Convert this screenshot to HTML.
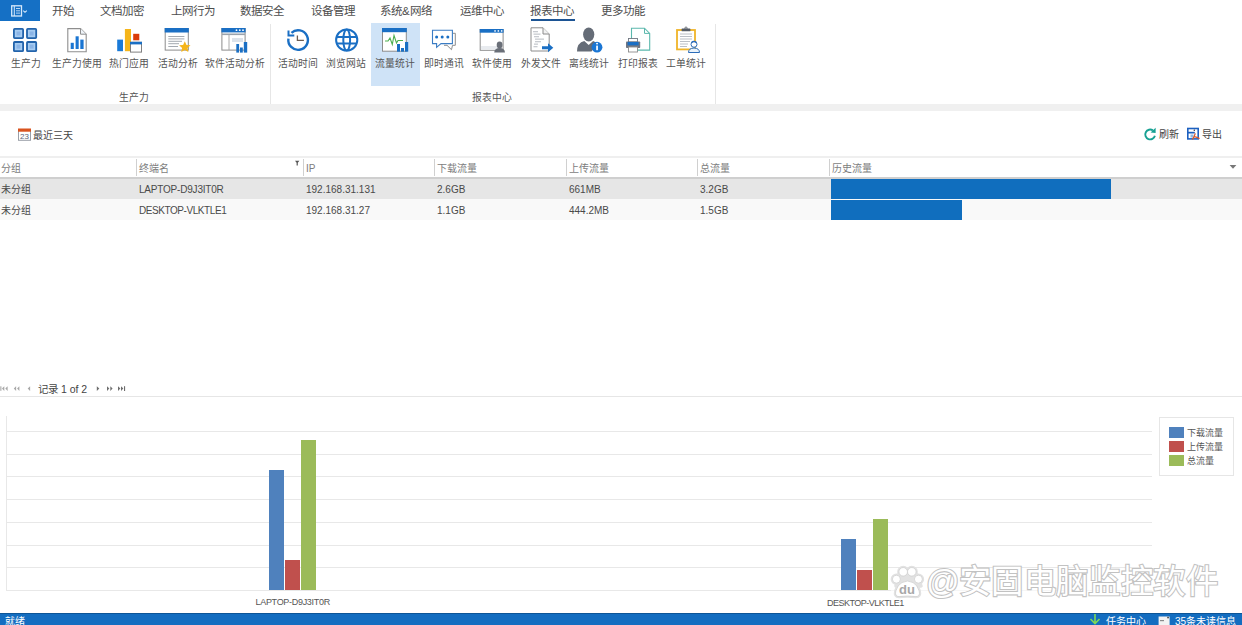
<!DOCTYPE html>
<html lang="zh-CN">
<head>
<meta charset="utf-8">
<style>
*{margin:0;padding:0;box-sizing:border-box}
html,body{width:1242px;height:625px;overflow:hidden;background:#fff}
body{position:relative;font-family:"Liberation Sans",sans-serif;color:#444}
.a{position:absolute;white-space:nowrap}
.tab{position:absolute;top:3.3px;font-size:11.5px;line-height:16px;color:#4d4d4d}
.lbl{position:absolute;top:57px;font-size:9.8px;line-height:14px;color:#555;text-align:center;width:60px;margin-left:-30px}
.ico{position:absolute;top:27px;width:26px;height:26px;margin-left:-13px}
.ico svg{display:block}
.sep{position:absolute;top:24px;height:80px;width:1px;background:#e6e6e6}
.th{position:absolute;top:158.5px;height:20px;font-size:10px;line-height:20px;color:#7d7d7d}
.hsep{position:absolute;top:159px;width:1px;height:17px;background:#d0d0d0}
.td{position:absolute;font-size:10px;line-height:20px;color:#4a4a4a}
.grid{position:absolute;left:6px;width:1146px;height:1px;background:#e8e8e8}
</style>
</head>
<body>
<!-- app button -->
<div class="a" style="left:0;top:0;width:40px;height:21px;background:#1570c5"></div>
<svg class="a" style="left:10px;top:4px" width="20" height="14" viewBox="10 4 20 14">
 <rect x="11.7" y="5.8" width="9.8" height="10.2" fill="none" stroke="#d6e8fa" stroke-width="1.3"/>
 <line x1="14.3" y1="5.8" x2="14.3" y2="16" stroke="#d6e8fa" stroke-width="1"/>
 <rect x="16" y="8" width="4" height="1" fill="#b8d4f2"/><rect x="16" y="10.3" width="4" height="1" fill="#b8d4f2"/><rect x="16" y="12.6" width="4" height="1" fill="#b8d4f2"/>
 <path d="M23.2 10.6 L25 12.3 L26.8 10.6" fill="none" stroke="#d6e8fa" stroke-width="1.1"/>
</svg>

<!-- tabs -->
<div class="tab" style="left:52px">开始</div>
<div class="tab" style="left:100px">文档加密</div>
<div class="tab" style="left:171px">上网行为</div>
<div class="tab" style="left:240px">数据安全</div>
<div class="tab" style="left:311px">设备管理</div>
<div class="tab" style="left:380px">系统&amp;网络</div>
<div class="tab" style="left:460px">运维中心</div>
<div class="tab" style="left:530px">报表中心</div>
<div class="a" style="left:530.5px;top:18.7px;width:44.5px;height:2.5px;background:#1c5494"></div>
<div class="tab" style="left:601px">更多功能</div>

<!-- ribbon -->
<div class="a" style="left:371px;top:23px;width:49px;height:63px;background:#cfe3f7"></div>
<div class="sep" style="left:270px"></div>
<div class="sep" style="left:715px"></div>

<svg class="a" style="left:0;top:0" width="720" height="104" viewBox="0 0 720 104">
<!-- 1 grid -->
<g stroke="#2263ab" stroke-width="1.8" fill="#a6ccf2">
<rect x="13.9" y="28.9" width="9.2" height="9.2" rx="0.8"/>
<rect x="27" y="28.9" width="9.2" height="9.2" rx="0.8"/>
<rect x="13.9" y="42" width="9.2" height="9.2" rx="0.8"/>
<rect x="27" y="42" width="9.2" height="9.2" rx="0.8"/>
</g>
<g fill="#8ab4e6">
<rect x="16.5" y="31.5" width="4" height="4"/><rect x="29.6" y="31.5" width="4" height="4"/>
<rect x="16.5" y="44.6" width="4" height="4"/><rect x="29.6" y="44.6" width="4" height="4"/>
</g>
<!-- 2 doc chart -->
<path d="M67.8 28.6 H80.5 L86.2 34.2 V51.7 H67.8 Z" fill="#fff" stroke="#8e8e8e" stroke-width="1.1"/>
<path d="M80.5 28.6 V34.2 H86.2" fill="#eef3f8" stroke="#8e8e8e" stroke-width="1"/>
<g fill="#1a75d2">
<rect x="70.7" y="42.8" width="3.1" height="6.2"/>
<rect x="75.6" y="36.3" width="3.1" height="12.7"/>
<rect x="80.3" y="39.6" width="3.3" height="9.4"/>
</g>
<!-- 3 hot apps -->
<rect x="117.2" y="39.6" width="5.8" height="11.6" fill="#1a7ad8"/>
<rect x="124.9" y="29" width="6.1" height="22.2" fill="#f5b51b"/>
<rect x="133.2" y="33.8" width="6.1" height="6.5" fill="#da3c0a"/>
<rect x="130.5" y="42.3" width="11" height="9.8" fill="#fff" stroke="#7f7f7f" stroke-width="1"/>
<rect x="130" y="41.8" width="12" height="2.6" fill="#1a6fc4"/>
<!-- 4 activity analysis -->
<rect x="165.2" y="28.5" width="23.1" height="21.6" fill="#fff" stroke="#8c8c8c" stroke-width="1"/>
<rect x="164.7" y="28" width="24.1" height="4.5" fill="#1a6fc4"/>
<g stroke="#9aa0a8" stroke-width="0.9">
<line x1="168.3" y1="36.5" x2="184.4" y2="36.5"/>
<line x1="168.3" y1="38.9" x2="184.4" y2="38.9"/>
<line x1="168.3" y1="41.3" x2="182" y2="41.3"/>
<line x1="168.3" y1="43.7" x2="179" y2="43.7"/>
<line x1="168.3" y1="46.5" x2="178" y2="46.5"/>
</g>
<path d="M184.8 41.2 L186.5 44.9 L190.5 45.3 L187.5 48 L188.4 52 L184.8 49.9 L181.2 52 L182.1 48 L179.1 45.3 L183.1 44.9 Z" fill="#f5b51b"/>
<!-- 5 software activity analysis -->
<rect x="221.9" y="28.5" width="23.2" height="21.6" fill="#fff" stroke="#8c8c8c" stroke-width="1"/>
<rect x="221.4" y="28" width="24.2" height="4.4" fill="#1a6fc4"/>
<g fill="#fff"><circle cx="236.5" cy="30.2" r="0.9"/><circle cx="239.8" cy="30.2" r="0.9"/><circle cx="243" cy="30.2" r="0.9"/></g>
<rect x="222" y="33.5" width="23" height="1.6" fill="#9aa3ad"/>
<line x1="229" y1="35" x2="229" y2="50" stroke="#a0a0a0" stroke-width="0.9"/>
<rect x="232" y="38" width="11" height="4" fill="#dde3ea"/>
<g fill="#1a6fc4">
<rect x="236.3" y="44" width="2.8" height="8.6"/>
<rect x="240" y="47.5" width="2.8" height="5.1"/>
<rect x="243.8" y="42" width="3.4" height="10.6"/>
</g>
<!-- 6 history clock -->
<path d="M291.46 32.8 A9.8 9.8 0 1 1 288.4 38.6" fill="none" stroke="#1a6fc4" stroke-width="2.4"/>
<path d="M288.5 30.4 V35.6 H294.3" fill="none" stroke="#1a6fc4" stroke-width="2"/>
<path d="M297.4 35.6 V40.4 H303.9" fill="none" stroke="#6e5d52" stroke-width="1.3"/>
<!-- 7 globe -->
<g fill="none" stroke="#1a6fc4" stroke-width="2">
<circle cx="346.7" cy="40" r="10.6"/>
<ellipse cx="346.7" cy="40" rx="3.4" ry="10.6"/>
<line x1="336.5" y1="37" x2="357" y2="37"/>
<line x1="336.5" y1="43.5" x2="357" y2="43.5"/>
</g>
<!-- 8 traffic stats -->
<rect x="382.5" y="28.5" width="23.8" height="22.7" fill="#fff" stroke="#8c8c8c" stroke-width="1"/>
<rect x="382" y="28" width="24.8" height="4.2" fill="#1a6fc4"/>
<path d="M385 41 H388 L390 38 L392.3 44.5 L394 35.5 L396.5 43 L398 40.5 H403" fill="none" stroke="#4caf50" stroke-width="1.1"/>
<g fill="#1a6fc4">
<rect x="397" y="44" width="3" height="7.7"/>
<rect x="401" y="48" width="3" height="3.7"/>
<rect x="405" y="42" width="3.2" height="9.7"/>
</g>
<!-- 9 chat -->
<path d="M453 33.3 H455.3 V45.3 H452.5 L451.5 49.7 L447 45.3 H444" fill="#fff" stroke="#8c8c8c" stroke-width="1"/>
<path d="M432.5 30.3 H452.4 V43.6 H441 L436.6 47.3 V43.6 H432.5 Z" fill="#fff" stroke="#3a7cc4" stroke-width="1.1"/>
<g fill="#1a6fc4"><circle cx="436.6" cy="37" r="1.5"/><circle cx="442.2" cy="37" r="1.5"/><circle cx="447.8" cy="37" r="1.5"/></g>
<!-- 10 software use -->
<rect x="480.2" y="29.5" width="22.9" height="20.8" fill="#fff" stroke="#8c8c8c" stroke-width="1"/>
<rect x="479.7" y="29" width="23.9" height="3.7" fill="#1a6fc4"/>
<g fill="#fff"><rect x="494.3" y="30.2" width="1.5" height="1.5"/><rect x="497.6" y="30.2" width="1.5" height="1.5"/><rect x="500.9" y="30.2" width="1.5" height="1.5"/></g>
<rect x="481" y="46" width="21" height="3.5" fill="#e8ebef"/>
<ellipse cx="499.6" cy="45" rx="2.9" ry="3.4" fill="#6a6f78"/>
<path d="M494.2 52.6 Q494.5 48.3 499.6 48.1 Q504.7 48.3 505 52.6 Z" fill="#6a6f78"/>
<!-- 11 outgoing file -->
<path d="M531 27.8 H543 L549.2 34 V51 H531 Z" fill="#fff" stroke="#8c8c8c" stroke-width="1"/>
<path d="M543 27.8 V34 H549.2" fill="#f2f2f2" stroke="#8c8c8c" stroke-width="1"/>
<g fill="#c8cbd0">
<rect x="533" y="31" width="5" height="1.3"/><rect x="533.5" y="33.5" width="7" height="1.3"/>
<rect x="534" y="36" width="5" height="1.3"/><rect x="535" y="38.5" width="9" height="1.3"/>
<rect x="535" y="41" width="6" height="1.3"/><rect x="534" y="43.5" width="4" height="1.3"/>
<rect x="533.5" y="46" width="4" height="1.3"/>
</g>
<path d="M542 46.3 H548 V43.3 L553.3 47.8 L548 52.3 V49.3 H542 Z" fill="#1a6fc4"/>
<!-- 12 offline stats -->
<ellipse cx="588.7" cy="34.5" rx="5.6" ry="7" fill="#656c77"/>
<path d="M577 51.5 Q577 42.8 584.3 41 L588.7 45 L593.1 41 Q596 42 597.5 44 L591.5 51.5 Z" fill="#656c77"/>
<circle cx="597" cy="47.2" r="5.4" fill="#1a76d4"/>
<rect x="596.2" y="45.6" width="1.7" height="4.6" fill="#fff"/>
<circle cx="597.05" cy="43.6" r="0.95" fill="#fff"/>
<!-- 13 print report -->
<path d="M631.5 28.2 H644.5 L649.7 33.4 V50.1 H631.5 Z" fill="#fff" stroke="#5bb8ad" stroke-width="1.1"/>
<path d="M644.5 28.2 V33.4 H649.7" fill="none" stroke="#5bb8ad" stroke-width="1"/>
<rect x="628.5" y="38.5" width="9" height="3.5" fill="#fff" stroke="#707782" stroke-width="0.9"/>
<rect x="626" y="41.5" width="14.2" height="6.5" rx="0.8" fill="#6f7683"/>
<rect x="627.6" y="42" width="11" height="3.3" fill="#1a6fc4"/>
<rect x="628.5" y="47" width="9" height="5" fill="#fff" stroke="#8c8c8c" stroke-width="0.9"/>
<!-- 14 work order -->
<rect x="677" y="30" width="18" height="19.4" fill="#fff" stroke="#f0b429" stroke-width="1.8"/>
<rect x="681.6" y="28.5" width="8.8" height="2.8" rx="0.6" fill="#555c66"/>
<circle cx="686" cy="28.2" r="1.2" fill="none" stroke="#555c66" stroke-width="0.8"/>
<g stroke="#b3b8bf" stroke-width="0.9">
<line x1="680" y1="34" x2="692" y2="34"/><line x1="680" y1="36.5" x2="692" y2="36.5"/>
<line x1="680" y1="39" x2="692" y2="39"/><line x1="680" y1="41.5" x2="690" y2="41.5"/>
<line x1="680" y1="44" x2="688" y2="44"/><line x1="680" y1="46.5" x2="687" y2="46.5"/>
</g>
<circle cx="694" cy="44.3" r="3" fill="#fff" stroke="#2c6cb8" stroke-width="1"/>
<path d="M688.5 52.5 Q688.5 48.3 694 48 Q699.5 48.3 699.5 52.5 Z" fill="#eaf3fb" stroke="#2c6cb8" stroke-width="1"/>
<path d="M691.6 42.5 Q694 40.6 696.4 42.5" fill="none" stroke="#2c6cb8" stroke-width="1.4"/>
</svg>

<div class="lbl" style="left:25.5px">生产力</div>
<div class="lbl" style="left:77px">生产力使用</div>
<div class="lbl" style="left:129px">热门应用</div>
<div class="lbl" style="left:177.5px">活动分析</div>
<div class="lbl" style="left:234.5px">软件活动分析</div>
<div class="lbl" style="left:297.5px">活动时间</div>
<div class="lbl" style="left:346px">浏览网站</div>
<div class="lbl" style="left:395px">流量统计</div>
<div class="lbl" style="left:444px">即时通讯</div>
<div class="lbl" style="left:492px">软件使用</div>
<div class="lbl" style="left:541px">外发文件</div>
<div class="lbl" style="left:589px">离线统计</div>
<div class="lbl" style="left:638px">打印报表</div>
<div class="lbl" style="left:686px">工单统计</div>

<div class="lbl" style="left:134px;top:91px">生产力</div>
<div class="lbl" style="left:492px;top:91px">报表中心</div>

<!-- gray band -->
<div class="a" style="left:0;top:104px;width:1242px;height:7px;background:#f0f0f0"></div>

<!-- toolbar -->
<div class="a" style="left:33px;top:129px;font-size:10px;line-height:14px;color:#444">最近三天</div>
<div class="a" style="left:1159px;top:127.5px;font-size:10px;line-height:14px;color:#444">刷新</div>
<div class="a" style="left:1202px;top:127.5px;font-size:10px;line-height:14px;color:#444">导出</div>

<!-- table -->
<div class="a" style="left:0;top:155.5px;width:1242px;height:2px;background:#efefef"></div>
<div class="a" style="left:0;top:177px;width:1242px;height:2px;background:#cfcfcf"></div>
<div class="a" style="left:0;top:179px;width:1242px;height:20px;background:#e6e6e6"></div>
<div class="a" style="left:0;top:199px;width:1242px;height:21px;background:#f9f9f9"></div>

<div class="hsep" style="left:136px"></div>
<div class="hsep" style="left:303px"></div>
<div class="hsep" style="left:434px"></div>
<div class="hsep" style="left:566px"></div>
<div class="hsep" style="left:697px"></div>
<div class="hsep" style="left:829px"></div>

<div class="th" style="left:1px">分组</div>
<div class="th" style="left:139px">终端名</div>
<div class="th" style="left:306px">IP</div>
<div class="th" style="left:437px">下载流量</div>
<div class="th" style="left:569px">上传流量</div>
<div class="th" style="left:700px">总流量</div>
<div class="th" style="left:832px">历史流量</div>

<div class="td" style="left:1px;top:180px">未分组</div>
<div class="td" style="left:139px;top:180px;letter-spacing:-0.2px">LAPTOP-D9J3IT0R</div>
<div class="td" style="left:306px;top:180px">192.168.31.131</div>
<div class="td" style="left:437px;top:180px">2.6GB</div>
<div class="td" style="left:569px;top:180px">661MB</div>
<div class="td" style="left:700px;top:180px">3.2GB</div>
<div class="a" style="left:831px;top:179px;width:280px;height:20px;background:#106ebe"></div>

<div class="td" style="left:1px;top:201px">未分组</div>
<div class="td" style="left:139px;top:201px;letter-spacing:-0.43px">DESKTOP-VLKTLE1</div>
<div class="td" style="left:306px;top:201px">192.168.31.27</div>
<div class="td" style="left:437px;top:201px">1.1GB</div>
<div class="td" style="left:569px;top:201px">444.2MB</div>
<div class="td" style="left:700px;top:201px">1.5GB</div>
<div class="a" style="left:831px;top:200px;width:131px;height:20px;background:#106ebe"></div>

<!-- pager -->
<div class="a" style="left:38px;top:382px;font-size:10.5px;line-height:15px;color:#444">记录 1 of 2</div>
<div class="a" style="left:0;top:396px;width:1242px;height:1px;background:#e6e6e6"></div>

<!-- chart -->
<div class="a" style="left:6px;top:416px;width:1px;height:175px;background:#e8e8e8"></div>
<div class="grid" style="top:431px"></div>
<div class="grid" style="top:454px"></div>
<div class="grid" style="top:476px"></div>
<div class="grid" style="top:499px"></div>
<div class="grid" style="top:522px"></div>
<div class="grid" style="top:545px"></div>
<div class="grid" style="top:567px"></div>
<div class="grid" style="top:590px"></div>

<div class="a" style="left:269px;top:470px;width:15px;height:120px;background:#4f81bd"></div>
<div class="a" style="left:285px;top:560px;width:15px;height:30px;background:#c0504d"></div>
<div class="a" style="left:301px;top:440px;width:15px;height:150px;background:#9bbb59"></div>
<div class="a" style="left:841px;top:539px;width:15px;height:51px;background:#4f81bd"></div>
<div class="a" style="left:857px;top:570px;width:15px;height:20px;background:#c0504d"></div>
<div class="a" style="left:873px;top:519px;width:15px;height:71px;background:#9bbb59"></div>

<div class="a" style="left:255.5px;top:595.5px;font-size:9px;line-height:12px;color:#555;letter-spacing:-0.3px">LAPTOP-D9J3IT0R</div>
<div class="a" style="z-index:5;left:827px;top:596.5px;font-size:9px;line-height:12px;color:#555;letter-spacing:-0.5px">DESKTOP-VLKTLE1</div>

<!-- legend -->
<div class="a" style="left:1159px;top:417px;width:75px;height:59px;border:1px solid #e6e6e6"></div>
<div class="a" style="left:1169px;top:427px;width:15px;height:11px;background:#4f81bd"></div>
<div class="a" style="left:1169px;top:441px;width:15px;height:11px;background:#c0504d"></div>
<div class="a" style="left:1169px;top:455px;width:15px;height:11px;background:#9bbb59"></div>
<div class="a" style="left:1187px;top:427px;font-size:9px;line-height:12px;color:#555">下载流量</div>
<div class="a" style="left:1187px;top:441px;font-size:9px;line-height:12px;color:#555">上传流量</div>
<div class="a" style="left:1187px;top:455px;font-size:9px;line-height:12px;color:#555">总流量</div>

<!-- status bar -->
<div class="a" style="left:0;top:613px;width:1242px;height:12px;background:#136dc0;border-top:1px solid #0d5597"></div>
<div class="a" style="left:5px;top:615px;font-size:10px;line-height:14px;color:#fff">就绪</div>
<div class="a" style="left:1106px;top:615px;font-size:10px;line-height:14px;color:#fff">任务中心</div>
<div class="a" style="left:1175px;top:615px;font-size:10px;line-height:14px;color:#fff">35条未读信息</div>
<!-- toolbar icons -->
<svg class="a" style="left:17px;top:127px" width="16" height="16" viewBox="17 127 16 16">
 <rect x="18.5" y="129.5" width="12" height="10.8" fill="#fff" stroke="#9a9fa8" stroke-width="1"/>
 <rect x="18" y="128.5" width="13" height="3.2" fill="#d9531e"/>
 <text x="24.5" y="139.3" font-family="Liberation Sans" font-size="8" text-anchor="middle" fill="#5a6478">23</text>
</svg>
<svg class="a" style="left:1143px;top:127px" width="15" height="15" viewBox="1143 127 15 15">
 <path d="M1152.9 130.4 A4.9 4.9 0 1 0 1154.9 135.7" fill="none" stroke="#17a193" stroke-width="1.9"/>
 <path d="M1155.6 127.8 L1155.6 132.9 L1150.6 132.5 Z" fill="#17a193"/>
</svg>
<svg class="a" style="left:1186px;top:127px" width="15" height="15" viewBox="1186 127 15 15">
 <rect x="1187.8" y="128.5" width="10.4" height="10.4" fill="#fff" stroke="#1c60c0" stroke-width="1.6"/>
 <rect x="1188" y="131.8" width="6.8" height="1.7" fill="#1c60c0"/>
 <rect x="1190.5" y="134.5" width="3" height="3" fill="#8dbbe8"/>
 <circle cx="1194.3" cy="130.2" r="0.7" fill="#223"/>
 <path d="M1195.3 133.4 Q1194.3 137 1192.3 139.6 M1194.4 136.6 Q1197 137.3 1199.6 138.6" fill="none" stroke="#db5a2c" stroke-width="1.3"/>
</svg>
<!-- header filter + dropdown -->
<svg class="a" style="left:294px;top:160px" width="7" height="7" viewBox="294 160 7 7">
 <path d="M295 160.8 H299.4 L297.8 162.8 V165.4 H296.6 V162.8 Z" fill="#555"/>
</svg>
<svg class="a" style="left:1229px;top:164px" width="8" height="6" viewBox="1229 164 8 6">
 <path d="M1229.6 165 H1236.4 L1233 168.8 Z" fill="#777"/>
</svg>
<!-- pager arrows -->
<svg class="a" style="left:0;top:384px" width="130" height="9" viewBox="0 384 130 9">
 <g fill="#a8a8a8">
  <rect x="0.3" y="386.3" width="1.1" height="4.5"/>
  <path d="M4.3 386.2 V391 L2 388.6 Z"/><path d="M7.6 386.2 V391 L5.3 388.6 Z"/>
  <path d="M16.1 386.2 V391 L13.8 388.6 Z"/><path d="M19.4 386.2 V391 L17.1 388.6 Z"/>
  <path d="M30.1 386.2 V391 L27.7 388.6 Z"/>
 </g>
 <g fill="#6e6e6e">
  <path d="M96.8 386.2 V391 L99.3 388.6 Z"/>
  <path d="M107 386.2 V391 L109.3 388.6 Z"/><path d="M110.3 386.2 V391 L112.6 388.6 Z"/>
  <path d="M118 386.2 V391 L120.3 388.6 Z"/><path d="M121 386.2 V391 L123.3 388.6 Z"/>
  <rect x="124" y="386.2" width="1.1" height="4.8"/>
 </g>
</svg>
<!-- watermark -->
<div class="a" style="left:891px;top:569px;width:330px;height:34px;background:rgba(255,255,255,0.6)"></div>
<svg class="a" style="left:880px;top:550px" width="350" height="56" viewBox="880 550 350 56">
 <g fill="#e2e2e2" stroke="#e2e2e2" stroke-width="3.5" stroke-linejoin="round">
  <circle cx="903.2" cy="571.8" r="4.3"/><circle cx="911.8" cy="571.8" r="4.3"/>
  <circle cx="896.4" cy="579.2" r="4"/><circle cx="918.4" cy="579.2" r="4"/>
  <path d="M899 574 L916 574 L921 586 L896 586 Z"/>
  <path d="M899 596.6 Q894.5 596.6 895.8 591 Q897.5 585 902 582.5 Q907.5 579.5 913 582.5 Q917.5 585 919.2 591 Q920.5 596.6 916 596.6 Q907.5 595.5 899 596.6 Z"/>
 </g>
 <g fill="#fff" stroke="#cfcfcf" stroke-width="0.8">
  <circle cx="903.2" cy="571.8" r="4.3"/><circle cx="911.8" cy="571.8" r="4.3"/>
  <circle cx="896.4" cy="579.2" r="4"/><circle cx="918.4" cy="579.2" r="4"/>
  <path d="M899 596.6 Q894.5 596.6 895.8 591 Q897.5 585 902 582.5 Q907.5 579.5 913 582.5 Q917.5 585 919.2 591 Q920.5 596.6 916 596.6 Q907.5 595.5 899 596.6 Z"/>
 </g>
 <text x="907" y="594.3" font-family="Liberation Sans" font-size="13" font-weight="bold" text-anchor="middle" fill="#a8a8a8">du</text>
 <text id="wm0" x="926" y="593" font-size="33" fill="#fff" stroke="#c2c2c2" stroke-width="2.2" paint-order="stroke" style="font-family:'Liberation Sans',sans-serif">@</text>
 <text id="wm" x="959.0 991.4 1023.7 1056.0 1088.4 1120.8 1153.1 1185.5" y="593.2" font-size="32.4" font-weight="500" fill="#fff" stroke="#c2c2c2" stroke-width="2.2" paint-order="stroke" style="font-family:'Liberation Sans',sans-serif">安固电脑监控软件</text>
</svg>
<!-- status icons -->
<svg class="a" style="left:1088px;top:613px" width="14" height="12" viewBox="1088 613 14 12">
 <path d="M1095 614 V623 M1090.5 619 L1095 623.5 L1099.5 619" fill="none" stroke="#7ed957" stroke-width="1.6"/>
</svg>
<svg class="a" style="left:1157px;top:614px" width="14" height="11" viewBox="1157 614 14 11">
 <rect x="1158.6" y="616.5" width="11" height="9" fill="#f2f2f2"/>
 <rect x="1160" y="620" width="4" height="1.2" fill="#8a8a8a"/>
 <rect x="1167.3" y="616.8" width="1.5" height="1.5" fill="#333"/>
</svg>
</body>
</html>
